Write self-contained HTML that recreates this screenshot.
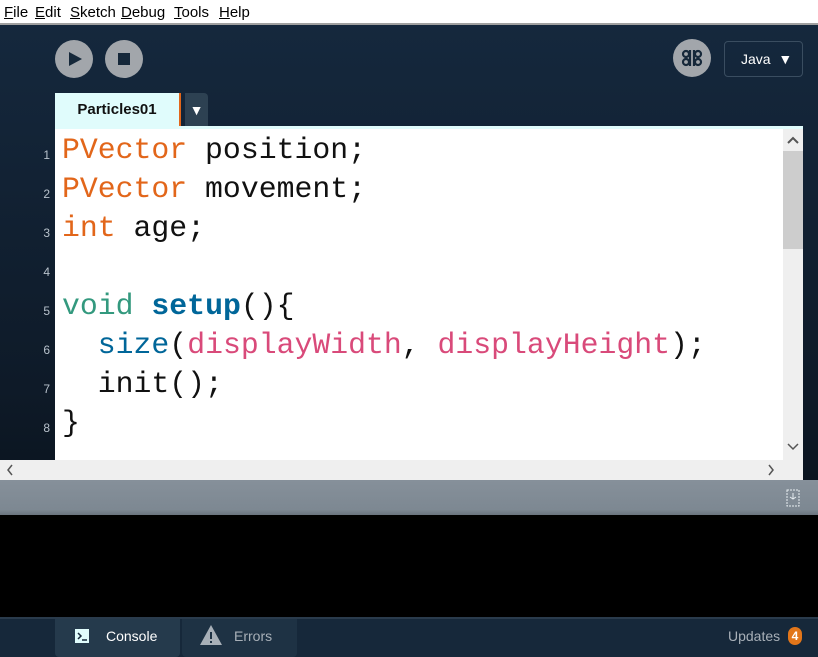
<!DOCTYPE html>
<html><head><style>
*{margin:0;padding:0;box-sizing:border-box}
body{width:818px;height:657px;overflow:hidden;position:relative;font-family:"Liberation Sans",sans-serif;background:#000}
.menu{position:absolute;left:0;top:0;width:818px;height:25px;background:#fff;border-bottom:2px solid #a0a0a0;font-size:15px;color:#000}
.menu span{position:absolute;top:4px}
.menu u{text-decoration:underline}
.main{position:absolute;left:0;top:25px;width:818px;height:455px;background:linear-gradient(#15283d,#0e1a28 80%,#0b1520)}
.btn{position:absolute;width:38px;height:38px;border-radius:50%;background:#a2a6ab}
.tab{position:absolute;left:55px;top:93px;width:126px;height:36px;background:#e0fcfc;border-right:2px solid #e2661a;font-weight:bold;font-size:15px;text-align:center;line-height:33px;color:#111}
.tabdd{position:absolute;left:185px;top:93px;width:23px;height:34px;background:#2d4152;border-radius:0 4px 0 0;color:#fff;font-size:14px;text-align:center;line-height:34px}
.edtop{position:absolute;left:55px;top:126px;width:748px;height:4px;background:#e0fcfc}
.editor{position:absolute;left:55px;top:129px;width:728px;height:331px;background:#fff}
.vs{position:absolute;left:783px;top:129px;width:20px;height:331px;background:#efefef}
.thumb{position:absolute;left:783px;top:151px;width:20px;height:98px;background:#cdcdcd}
.hs{position:absolute;left:0;top:460px;width:803px;height:20px;background:#efefef}
.code{position:absolute;left:62px;top:131px;font-family:"Liberation Mono",monospace;font-size:29.8px;line-height:39px;white-space:pre;color:#111}
.g{position:absolute;left:30px;width:20px;text-align:right;font-size:12px;color:#b8c2cc;font-family:"Liberation Sans",sans-serif}
.o{color:#e2661a}.t{color:#33997e}.b{color:#006699}.p{color:#d94a7a}
.gray{position:absolute;left:0;top:480px;width:818px;height:35px;background:linear-gradient(#86909a,#7d8892 85%,#6a747e)}
.foot{position:absolute;left:0;top:617px;width:818px;height:40px;background:#16283a;border-top:2px solid #2a3b4c}
</style></head><body>
<div class="menu">
<span style="left:4px"><u>F</u>ile</span><span style="left:35px"><u>E</u>dit</span><span style="left:70px"><u>S</u>ketch</span><span style="left:121px"><u>D</u>ebug</span><span style="left:174px"><u>T</u>ools</span><span style="left:219px"><u>H</u>elp</span>
</div>
<div class="main"></div>
<div class="btn" style="left:55px;top:40px"><svg width="38" height="38"><path d="M14 12 L27 19 L14 26Z" fill="#16283a"/></svg></div>
<div class="btn" style="left:105px;top:40px"><svg width="38" height="38"><rect x="13" y="13" width="12" height="12" fill="#16283a"/></svg></div>
<div class="btn" style="left:673px;top:39px"><svg width="38" height="38" fill="none" stroke="#16283a" stroke-width="2.2"><path d="M17 11 V27 M21 11 V27"/><circle cx="13" cy="15" r="3"/><circle cx="13" cy="23" r="3"/><circle cx="25" cy="15" r="3"/><circle cx="25" cy="23" r="3"/></svg></div>
<div style="position:absolute;left:724px;top:41px;width:79px;height:36px;border:1px solid #3a4d60;border-radius:4px;color:#fff;font-size:14px;line-height:34px;padding-left:16px">Java&nbsp;&nbsp;▼</div>
<div class="tab">Particles01</div>
<div class="tabdd">▼</div>
<div class="edtop"></div>
<div class="editor"></div>
<div class="vs"></div><div class="thumb"></div>
<svg style="position:absolute;left:786px;top:135px" width="14" height="10"><path d="M2 8 L7 3 L12 8" fill="none" stroke="#555" stroke-width="2"/></svg>
<svg style="position:absolute;left:786px;top:442px" width="14" height="10"><path d="M2 2 L7 7 L12 2" fill="none" stroke="#555" stroke-width="1.5"/></svg>
<div class="hs"><svg style="position:absolute;left:5px;top:4px" width="10" height="12"><path d="M7 1 L3 6 L7 11" fill="none" stroke="#555" stroke-width="1.5"/></svg><svg style="position:absolute;left:766px;top:4px" width="10" height="12"><path d="M3 1 L7 6 L3 11" fill="none" stroke="#555" stroke-width="1.5"/></svg></div>
<div class="g" style="top:148px">1</div><div class="g" style="top:187px">2</div><div class="g" style="top:226px">3</div><div class="g" style="top:265px">4</div><div class="g" style="top:304px">5</div><div class="g" style="top:343px">6</div><div class="g" style="top:382px">7</div><div class="g" style="top:421px">8</div>
<div class="code"><span class="o">PVector</span> position;
<span class="o">PVector</span> movement;
<span class="o">int</span> age;

<span class="t">void</span> <b class="b">setup</b>(){
  <span class="b">size</span>(<span class="p">displayWidth</span>, <span class="p">displayHeight</span>);
  init();
}</div>
<div class="gray"><svg style="position:absolute;left:786px;top:9px" width="14" height="18" fill="none" stroke="#e8eef2" stroke-width="1"><rect x="1" y="1" width="12" height="16" stroke-dasharray="2 1"/><path d="M4 8 L7 10 L10 8 M7 4 V10"/></svg></div>
<div class="foot">
<div style="position:absolute;left:55px;top:0;width:125px;height:38px;background:#253a4c;border-radius:0 0 4px 4px;color:#fff;font-size:14px;line-height:34px;padding-left:51px">Console<svg style="position:absolute;left:20px;top:10px" width="14" height="14"><rect width="14" height="14" fill="#e0fcfc"/><path d="M3 4 L6 7 L3 10" fill="none" stroke="#16283a" stroke-width="1.5"/><path d="M7 11 H12" stroke="#16283a" stroke-width="1.5"/></svg></div>
<div style="position:absolute;left:182px;top:0;width:115px;height:38px;background:#1e3244;border-radius:0 0 4px 4px;color:#a8b0b8;font-size:14px;line-height:34px;padding-left:52px">Errors<svg style="position:absolute;left:17px;top:5px" width="24" height="22"><path d="M12 1 L23 21 H1Z" fill="#a8b0b8"/><rect x="11" y="8" width="2" height="7" fill="#1e3244"/><rect x="11" y="17" width="2" height="2" fill="#1e3244"/></svg></div>
<div style="position:absolute;left:728px;top:0;color:#a8b0b8;font-size:14px;line-height:34px">Updates</div>
<div style="position:absolute;left:788px;top:8px;width:14px;height:18px;border-radius:7px;background:#e2761a;color:#fff;font-size:12px;text-align:center;line-height:18px;font-weight:bold">4</div>
</div>
</body></html>
